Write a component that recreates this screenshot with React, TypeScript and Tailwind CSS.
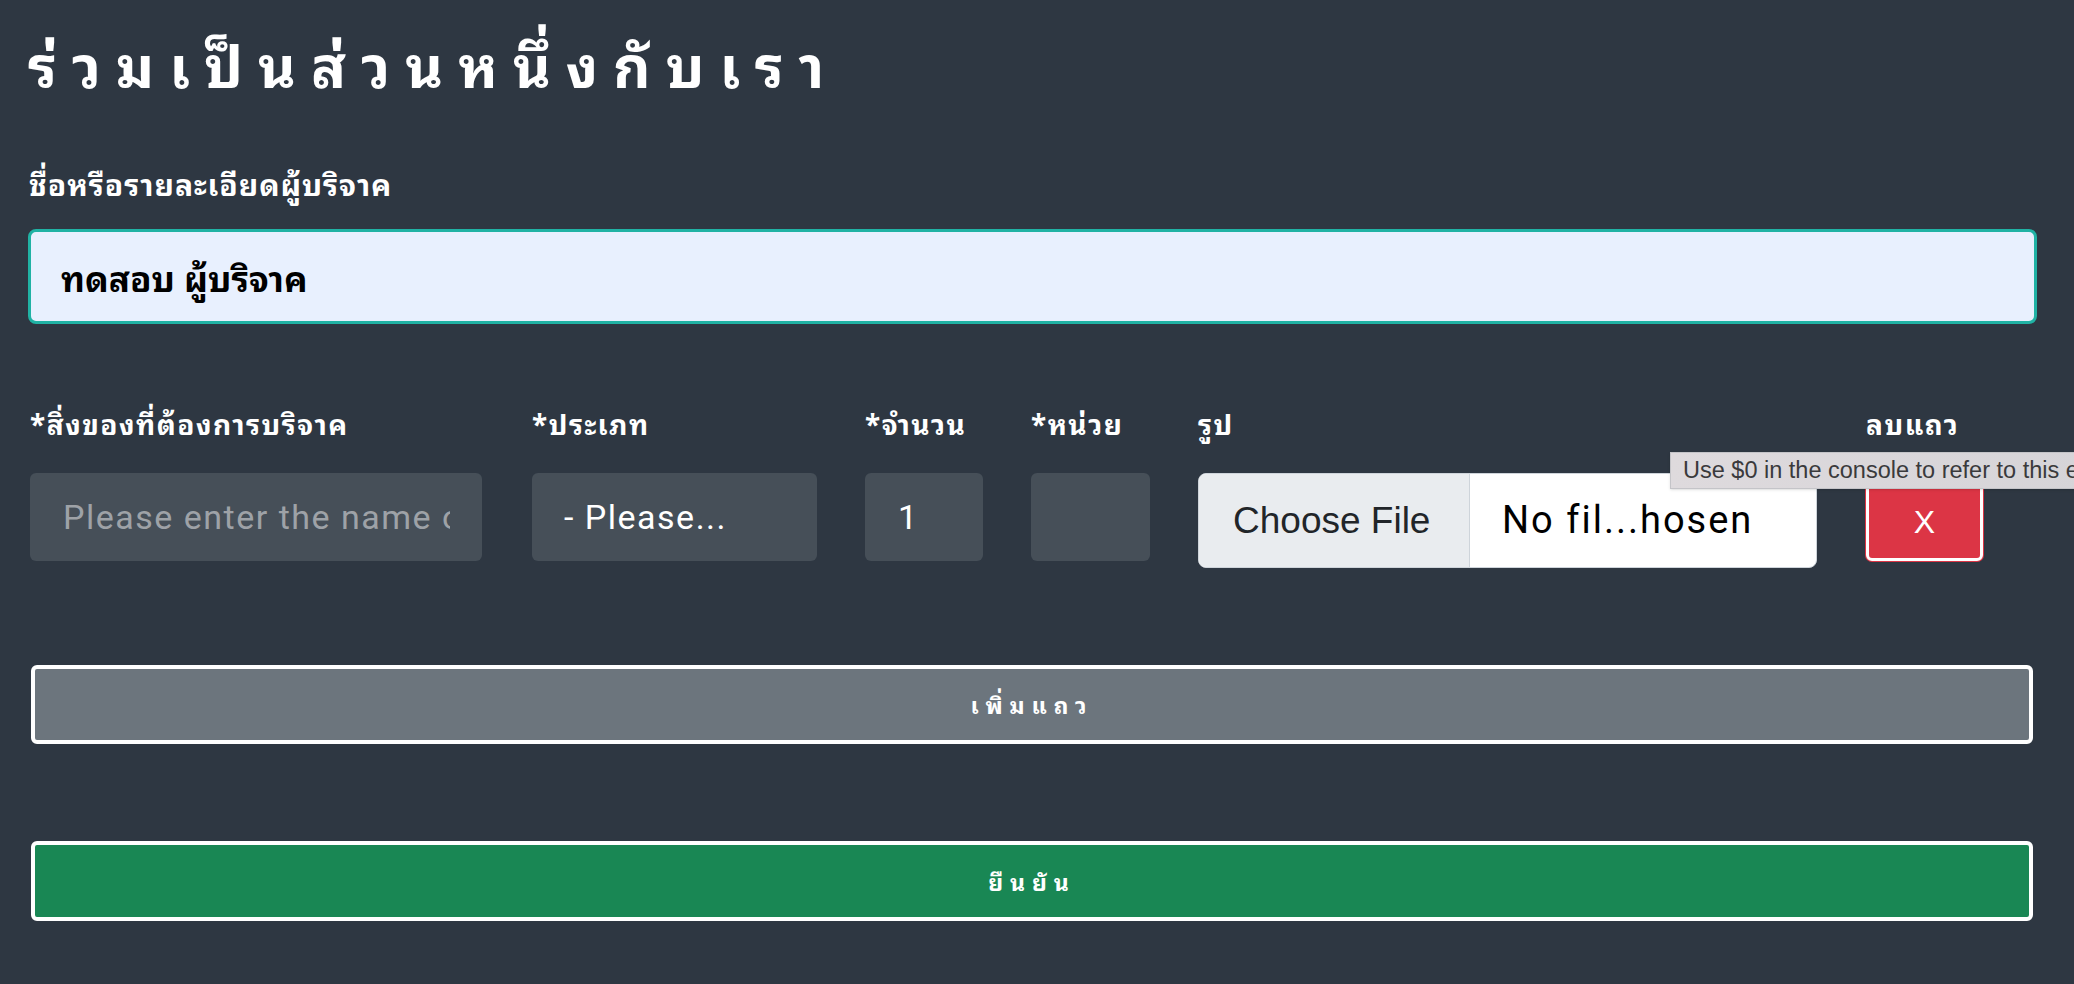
import React from "react";

const thai =
  "font-['Noto_Sans_Thai_Looped','Loma','Garuda','Waree','Tlwg_Typo','Noto_Sans_Thai','DejaVu_Sans',sans-serif]";

export default function App() {
  return (
    <div className={`relative min-h-[984px] w-full overflow-hidden bg-[#2e3742] text-white ${thai}`}>
      <div className="flex flex-col pl-[28px]">
        <h1 className="mt-[24px] h-[76px] text-[58px] font-bold leading-[76px] tracking-[15px] text-white">
          ร่วมเป็นส่วนหนึ่งกับเรา
        </h1>

        <label className="mt-[65px] block h-[36px] pl-[1px] text-[30px] font-bold leading-[36px] tracking-[1px]">
          ชื่อหรือรายละเอียดผู้บริจาค
        </label>

        <div className="mt-[28px] flex h-[95px] w-[2009px] items-center rounded-[8px] border-[3px] border-[#20b2a4] bg-[#e8f0fe] pl-[30px] text-[35px] font-bold text-black">
          ทดสอบ ผู้บริจาค
        </div>

        <div className="mt-[81px] flex pl-[2px]">
          <div className="flex w-[452px] flex-col">
            <span className="h-[36px] whitespace-nowrap text-[28px] font-bold leading-[36px] tracking-[1.5px]">
              *สิ่งของที่ต้องการบริจาค
            </span>
            <div className="mt-[32px] flex h-[88px] items-center rounded-[6px] bg-[#464f58] pl-[33px]">
              <span className="w-[387px] overflow-hidden whitespace-nowrap font-['Roboto',sans-serif] text-[34px] tracking-[1.5px] text-[#9ea2a7]">
                Please enter the name of item
              </span>
            </div>
          </div>
          <div className="ml-[50px] flex w-[285px] flex-col">
            <span className="h-[36px] whitespace-nowrap text-[28px] font-bold leading-[36px] tracking-[1.5px]">*ประเภท</span>
            <div className="mt-[32px] flex h-[88px] items-center rounded-[6px] bg-[#464f58] pl-[32px] font-['Roboto',sans-serif] text-[34px] tracking-[1.5px] text-white">
              - Please...
            </div>
          </div>
          <div className="ml-[48px] flex w-[118px] flex-col">
            <span className="h-[36px] whitespace-nowrap text-[28px] font-bold leading-[36px] tracking-[1.5px]">*จำนวน</span>
            <div className="mt-[32px] flex h-[88px] items-center rounded-[6px] bg-[#464f58] pl-[33px] font-['Roboto',sans-serif] text-[34px] text-white">
              1
            </div>
          </div>
          <div className="ml-[48px] flex w-[119px] flex-col">
            <span className="h-[36px] whitespace-nowrap text-[28px] font-bold leading-[36px] tracking-[1.5px]">*หน่วย</span>
            <div className="mt-[32px] h-[88px] rounded-[6px] bg-[#464f58]" />
          </div>
          <div className="ml-[48px] flex w-[619px] flex-col">
            <span className="h-[36px] text-[28px] font-bold leading-[36px] tracking-[1.5px]">รูป</span>
            <div className="mt-[32px] flex h-[95px] overflow-hidden rounded-[8px] border border-[#ced4da] bg-white">
              <div className="flex w-[271px] items-center border-r border-[#ced4da] bg-[#e9ecef] pl-[34px] font-['Liberation_Sans',sans-serif] text-[37px] text-[#212529]">
                Choose File
              </div>
              <div className="flex items-center pl-[32px] font-['Roboto',sans-serif] text-[38px] tracking-[2px] text-black">
                No fil...hosen
              </div>
            </div>
          </div>
          <div className="ml-[49px] flex w-[117px] flex-col">
            <span className="h-[36px] whitespace-nowrap text-[28px] font-bold leading-[36px] tracking-[1.5px]">ลบแถว</span>
            <button className="mt-[42px] flex h-[78px] items-center justify-center rounded-[6px] border-[3px] border-white bg-[#dc3545] font-['Liberation_Sans',sans-serif] text-[32px] text-white ring-1 ring-[#dc3545]">
              X
            </button>
          </div>
        </div>

        <button className="mt-[97px] ml-[3px] flex h-[79px] w-[2002px] items-center justify-center rounded-[6px] border-[4px] border-white bg-[#6c757d] text-[23px] font-bold tracking-[0.3em] text-white">
          เพิ่มแถว
        </button>

        <button className="mt-[97px] ml-[3px] flex h-[80px] w-[2002px] items-center justify-center rounded-[6px] border-[4px] border-white bg-[#198754] text-[23px] font-bold tracking-[0.3em] text-white">
          ยืนยัน
        </button>
      </div>

      <div className="absolute left-[1670px] top-[452px] flex h-[37px] w-[420px] items-center whitespace-nowrap border border-[#c4c4c8] bg-gradient-to-r from-[#dedadd] to-[#d6d4d8] pl-[12px] font-['Liberation_Sans',sans-serif] text-[23.5px] text-[#3a3a3c] shadow-sm">
        Use $0 in the console to refer to this element.
      </div>
    </div>
  );
}
